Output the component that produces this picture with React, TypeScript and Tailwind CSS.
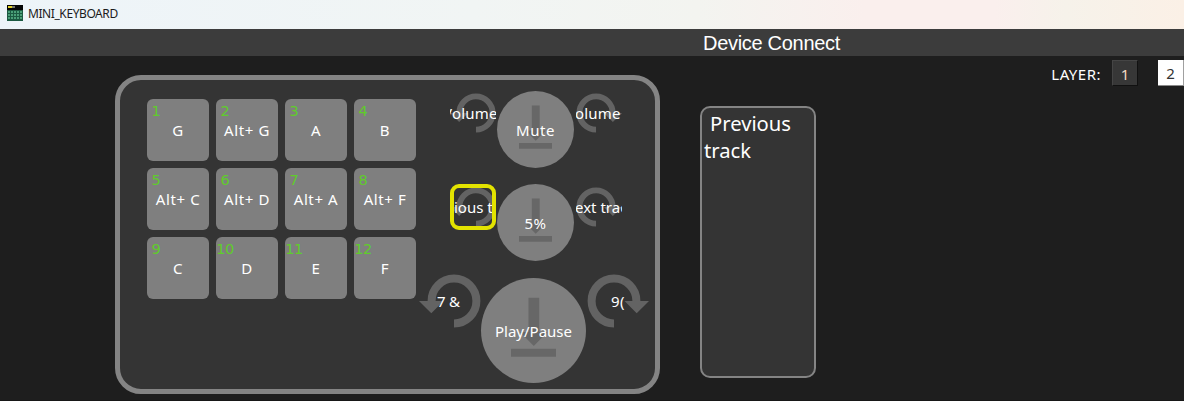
import clsx from "clsx";

const KEYS = ["G", "Alt+ G", "A", "B", "Alt+ C", "Alt+ D", "Alt+ A", "Alt+ F", "C", "D", "E", "F"];

function AppIcon() {
  return (
    <svg width="16" height="16" viewBox="0 0 16 16" shapeRendering="crispEdges">
      <rect width="16" height="16" fill="#050505" />
      <rect x="1" y="1" width="4" height="2" fill="#e3d327" />
      <rect x="5" y="1" width="3" height="2" fill="#77776a" />
      <rect y="5" width="16" height="11" fill="#1c5a42" />
      {[6, 9, 12].map((y) =>
        [1, 4, 7, 10, 13].map((x) => <rect key={`${x}-${y}`} x={x} y={y} width="2" height="2" fill="#4a9f78" />),
      )}
    </svg>
  );
}

function Key({ index, label }: { index: number; label: string }) {
  return (
    <div className="grid h-[62px] w-[62px] rounded-[6px] bg-[#7f7f7f]">
      <span className="col-start-1 row-start-1 mt-[2px] w-[18px] text-center font-['DejaVu_Sans',sans-serif] text-[14.5px] leading-[20px] tracking-[-0.4px] text-[#5fcc2b]">
        {index}
      </span>
      <span className="col-start-1 row-start-1 place-self-center text-[15px] leading-[20px] tracking-[0.6px] whitespace-nowrap">
        {label}
      </span>
    </div>
  );
}

function Rotation({ flip }: { flip?: boolean }) {
  return (
    <svg viewBox="0 0 62 62" className={clsx("col-start-1 row-start-1 h-full w-full", flip && "-scale-x-100")}>
      <path d="M12.6 32V31A22.4 22.4 0 1 1 35 53.4" fill="none" stroke="#636363" strokeWidth="8" />
      <path d="M0 31H24.5L12.3 43.2Z" fill="#636363" />
    </svg>
  );
}

type TurnProps = { label: string; flip?: boolean; large?: boolean; selected?: boolean; shift: string };

function Turn({ label, flip, large, selected, shift }: TurnProps) {
  return (
    <div className={clsx("grid shrink-0 grid-cols-1 grid-rows-1", large ? "h-[62px] w-[62px]" : "h-[46px] w-[46px]")}>
      <Rotation flip={flip} />
      <div
        className={clsx(
          "z-10 col-start-1 row-start-1 flex h-full w-full min-w-0 items-center overflow-hidden",
          selected && "rounded-[9px] border-4 border-[#e3e300]",
        )}
      >
        <span className={clsx("text-[15px] leading-[20px] whitespace-pre", shift)}>{label}</span>
      </div>
    </div>
  );
}

function Knob({ label, large }: { label: string; large?: boolean }) {
  return (
    <div
      className={clsx(
        "grid shrink-0 grid-cols-1 grid-rows-1 rounded-full bg-[#7f7f7f]",
        large ? "h-[105px] w-[105px]" : "h-[77px] w-[77px]",
      )}
    >
      <svg viewBox="0 0 105 105" className="col-start-1 row-start-1 h-full w-full" fill="#676767">
        <path d="M47.5 19.7H58.2V54H66.5L52.8 68L39 54H47.5Z" />
        <path d="M30 70.8H75V78.8H30Z" />
      </svg>
      <span
        className={clsx(
          "z-10 col-start-1 row-start-1 place-self-center pt-px text-[15px] leading-[20px] whitespace-nowrap",
          !large && "tracking-[0.5px]",
        )}
      >
        {label}
      </span>
    </div>
  );
}

export default function App() {
  return (
    <div className="h-[401px] w-[1190px] overflow-hidden bg-white font-['Noto_Sans',sans-serif] text-white">
      <div className="flex h-[401px] w-[1184px] flex-col overflow-hidden border-b border-[#171717] bg-[#1e1e1e]">
        <header className="flex h-[29px] shrink-0 items-center gap-[5px] bg-[linear-gradient(90deg,#edf4f9_0%,#f1f5f4_40%,#f3f4f0_59%,#faefed_73%,#faefed_84%,#f6f2ea_90%,#fbf0e6_100%)] pr-2 pb-[3px] pl-[7px] text-[12px] text-[#1b1b1b]">
          <AppIcon />
          <span className="pt-[2px] tracking-[-0.42px]">MINI_KEYBOARD</span>
        </header>
        <div className="flex h-[27px] shrink-0 items-center bg-[#3c3c3c] pl-[703px] font-['Liberation_Sans',sans-serif] text-[20px] tracking-[-0.3px]">
          Device Connect
        </div>
        <main className="flex items-start">
          <section className="mt-[19px] ml-[115px] flex h-[319px] w-[545px] shrink-0 items-start rounded-[26px] border-5 border-[#848484] bg-[#343434] pl-[27px]">
            <div className="mt-[19px] grid grid-cols-[repeat(4,62px)] gap-[7px]">
              {KEYS.map((label, i) => (
                <Key key={i} index={i + 1} label={label} />
              ))}
            </div>
            <div className="mt-[10px] ml-[3px] w-[230px]">
              <div className="flex h-[94px] items-start pl-[31px]">
                <Turn label="Volume-" shift="-ml-[7px] tracking-[0.2px]" />
                <div className="mt-px mr-[2px] ml-px">
                  <Knob label="Mute" />
                </div>
                <Turn label="olume" shift="-ml-px tracking-[0.2px]" flip />
              </div>
              <div className="flex h-[86px] items-start pl-[31px]">
                <Turn label="ious track" shift="ml-0" selected />
                <div className="mr-[2px] ml-px">
                  <Knob label="5%" />
                </div>
                <Turn label="ext track" shift="-ml-px" flip />
              </div>
              <div className="flex items-start">
                <Turn label="7 &" shift="ml-[18px] tracking-[-0.3px]" large />
                <div className="mt-[8px] mr-px">
                  <Knob label="Play/Pause" large />
                </div>
                <Turn label="9(" shift="ml-[24px] tracking-[0.5px]" flip large />
              </div>
            </div>
          </section>
          <section className="mt-[50px] ml-[40px] h-[272px] w-[116px] shrink-0 rounded-[10px] border-2 border-[#848484] bg-[#343434] pt-[2px] pl-[2px] text-[20.2px] leading-[27px]">
            <p className="pl-[6px]">Previous</p>
            <p>track</p>
          </section>
          <nav className="mt-[4px] ml-auto flex items-center text-[15px] leading-[20px]">
            <span className="mr-[11px] pt-[2px] tracking-[0.5px]">LAYER:</span>
            <button className="mr-[20px] h-[26px] w-[26px] border border-t-[#454545] border-r-[#111] border-b-[#111] border-l-[#454545] bg-[#373737] pt-px text-[#f3dcc4]">
              1
            </button>
            <button className="h-[26px] w-[26px] border-r border-b border-r-[#a0a0a0] border-b-[#8a8a8a] bg-white pt-px text-[#333]">
              2
            </button>
          </nav>
        </main>
      </div>
    </div>
  );
}
